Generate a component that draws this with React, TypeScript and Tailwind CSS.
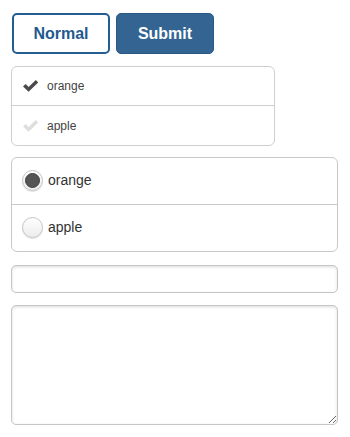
import React, { useState } from 'react';

const FRUITS = ['orange', 'apple'];

function CheckMark({ on }: { on: boolean }) {
  return (
    <svg width="17" height="14" viewBox="0 0 17 14" className="shrink-0">
      <path
        d="M1 7.5 L3.6 5 L6.6 8 L13.8 1 L16.2 3.4 L6.6 12.8 Z"
        fill={on ? '#4a4a4a' : '#dedede'}
      />
    </svg>
  );
}

function Radio({ on }: { on: boolean }) {
  return (
    <span className="w-[21px] h-[21px] rounded-full border border-[#c4c4c4] bg-gradient-to-b from-white to-[#ececec] shadow-[0_1px_1px_rgba(0,0,0,0.12)] flex items-center justify-center shrink-0">
      {on && <span className="w-[15px] h-[15px] rounded-full bg-[#555] border border-[#3f3f3f]" />}
    </span>
  );
}

export default function App() {
  const [checked] = useState<Record<string, boolean>>({ orange: true, apple: false });
  const [picked, setPicked] = useState('orange');

  return (
    <div className="w-[350px] h-[437px] bg-white px-[11px] pt-[13px] flex flex-col font-['Liberation_Sans',Arial,sans-serif]">
      <div className="flex gap-[6px] pl-px">
        <button className="w-[98px] h-[41px] rounded-[5px] border-2 border-[#235d92] bg-white text-[#1f5a8f] text-[16px] font-bold">
          Normal
        </button>
        <button className="w-[98px] h-[41px] rounded-[5px] border border-[#2a5884] bg-[#346592] text-white text-[16px] font-bold">
          Submit
        </button>
      </div>

      <ul className="mt-[12px] w-[264px] rounded-[6px] border border-[#cfcfcf] divide-y divide-[#cfcfcf]">
        {FRUITS.map((f) => (
          <li key={f} className="h-[39px] flex items-center gap-[8px] pl-[10px] text-[12px] text-[#444]">
            <CheckMark on={checked[f]} />
            {f}
          </li>
        ))}
      </ul>

      <ul className="mt-[11px] w-[327px] rounded-[6px] border border-[#c9c9c9] divide-y divide-[#c9c9c9]">
        {FRUITS.map((f) => (
          <li
            key={f}
            onClick={() => setPicked(f)}
            className="h-[46.5px] flex items-center gap-[5px] pl-[10px] text-[14px] text-[#333]"
          >
            <Radio on={picked === f} />
            {f}
          </li>
        ))}
      </ul>

      <input
        type="text"
        className="mt-[13px] w-[327px] h-[28px] rounded-[5px] border border-[#c6c6c6] shadow-[inset_0_1px_3px_rgba(0,0,0,0.15)] outline-none px-2 text-sm"
      />

      <textarea className="mt-[12px] w-[327px] h-[120px] rounded-[5px] border border-[#c6c6c6] shadow-[inset_0_1px_3px_rgba(0,0,0,0.15)] outline-none p-2 text-sm" />
    </div>
  );
}
